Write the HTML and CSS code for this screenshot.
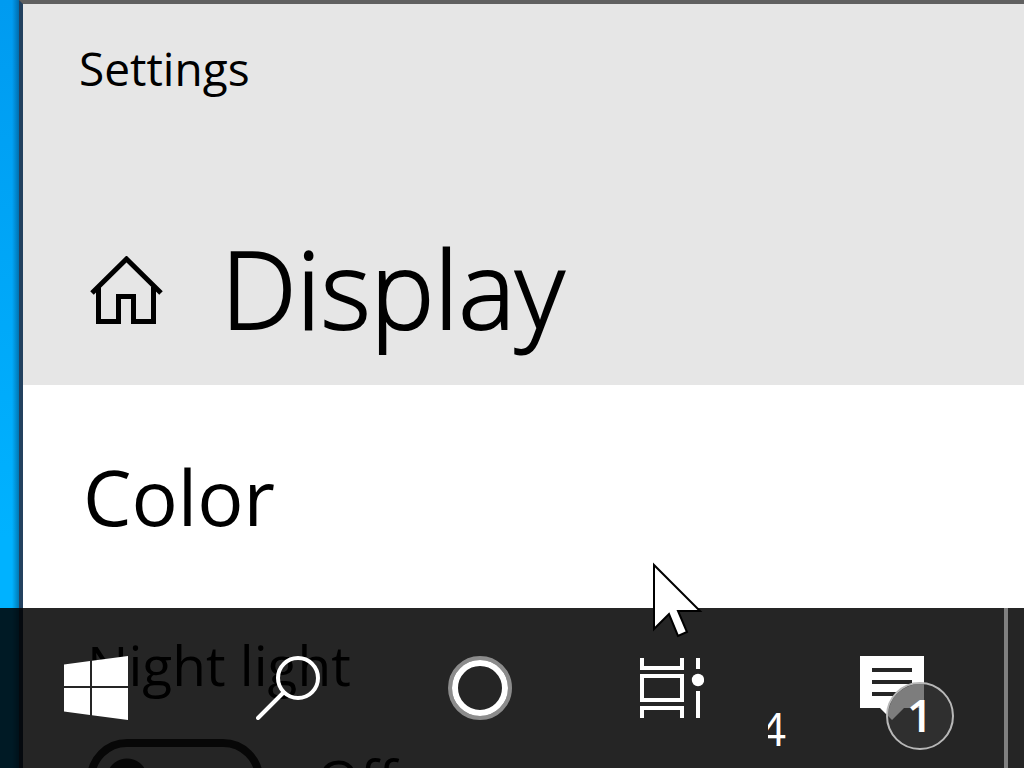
FILE: index.html
```html
<!DOCTYPE html>
<html lang="en">
<head>
<meta charset="utf-8">
<title>Settings</title>
<link rel="stylesheet" href="styles.css">
</head>
<body>
<div class="desktop">
  <main class="window">
    <header class="window-header">
      <div class="window-title">Settings</div>
      <div class="page-heading">
        <button class="home" aria-label="Home">
          <svg width="76" height="72" viewBox="0 0 76 72" fill="none" stroke="#000" stroke-width="5">
            <path d="M3 37 37.500 3 72 37"/>
            <path d="M9.500 31v34.500h20v-25h15v25h20V31"/>
          </svg>
        </button>
        <h1 class="page-name">Display</h1>
      </div>
    </header>
    <section class="content">
      <h2 class="section-name">Color</h2>
      <div class="setting">
        <label class="setting-name" for="night-light">Night light</label>
        <div class="switch-row">
          <input class="switch" type="checkbox" role="switch" id="night-light">
          <span class="switch-state">Off</span>
        </div>
      </div>
    </section>
  </main>
  <nav class="taskbar" aria-label="Taskbar">
    <button class="task" aria-label="Start">
      <svg width="64" height="64" viewBox="0 0 64 64" fill="#fff">
        <path d="M0 8.500 26 5v25H0zM28 4.700 64 0v30H28zM0 32h26v27L0 55.500zM28 32h36v32L28 59.300z"/>
      </svg>
    </button>
    <button class="task" aria-label="Search">
      <svg width="64" height="64" viewBox="0 0 64 64" fill="none" stroke="#fff" stroke-width="4">
        <circle cx="42" cy="22" r="20"/>
        <path d="M27.500 36.500 2 62" stroke-linecap="round"/>
      </svg>
    </button>
    <button class="task" aria-label="Cortana">
      <svg width="64" height="64" viewBox="0 0 64 64" fill="none">
        <circle cx="32" cy="32" r="30" stroke="#8c8c8c" stroke-width="4"/>
        <circle cx="32" cy="32" r="25" stroke="#fff" stroke-width="6"/>
      </svg>
    </button>
    <button class="task" aria-label="Task View">
      <svg width="64" height="64" viewBox="0 0 64 64" fill="none" stroke="#fff" stroke-width="4">
        <path d="M2 2v10h40V2M2 20h40v24H2zM2 62V52h40v10M58 2v11M58 35v27"/>
        <circle cx="58" cy="24" r="6.200" fill="#fff" stroke="none"/>
      </svg>
    </button>
    <div class="tray">
      <div class="clock"><span>4</span></div>
      <button class="notifications" aria-label="Notifications, 1 new">
        <svg width="96" height="96" viewBox="0 0 96 96">
          <path fill="#fff" d="M0 0h64v52H44L32 64 20 52H0z"/>
          <path stroke="#252525" stroke-width="4" d="M12 14h40M12 26h40M12 38h40"/>
          <circle cx="60" cy="60" r="33" fill="#2f2f2f"/>
          <clipPath id="badge-area"><circle cx="60" cy="60" r="32"/></clipPath>
          <path clip-path="url(#badge-area)" fill="#7d7d7d" d="M0 0h64v52H44L32 64 20 52H0z"/>
          <circle cx="60" cy="60" r="33" fill="none" stroke="#b8b8b8" stroke-width="2"/>
        </svg>
        <span class="badge">1</span>
      </button>
      <button class="show-desktop" aria-label="Show desktop"></button>
    </div>
  </nav>
  <svg class="pointer" width="52" height="76" viewBox="0 0 52 76" aria-hidden="true">
    <path d="M2 3v64l15-15 9 22 9-4-9-21h22z" fill="#fff" stroke="#000" stroke-width="2"/>
  </svg>
</div>
</body>
</html>
```
FILE: styles.css
```css
* { box-sizing: border-box; }

body {
  margin: 0;
  font-family: "Open Sans", "Noto Sans", sans-serif;
  color: #000;
}

button {
  margin: 0;
  padding: 0;
  border: 0;
  background: none;
  color: inherit;
  font: inherit;
}

svg { display: block; }

.desktop {
  position: relative;
  height: 100vh;
  overflow: hidden;
  padding-left: 19px;
  background: linear-gradient(90deg, transparent 12px, rgba(0, 50, 90, .45) 19px, transparent 19px), linear-gradient(#009bf0, #00b2ff 70%);
}

.window {
  min-height: 100%;
  border-left: 4px solid #23415f;
  border-top: 4px solid #606060;
  background: #fff;
}

.window-header {
  padding: 32px 56px 25px;
  background: #e6e6e6;
}

.window-title {
  font-size: 46px;
  line-height: 64px;
}

.page-heading {
  display: flex;
  align-items: center;
  gap: 56px;
  padding: 0 10px;
  margin-top: 116px;
}

.page-name {
  margin: 0;
  font-size: 107px;
  font-weight: 300;
  line-height: 144px;
  -webkit-text-stroke: 2px #000;
}

.home { padding-top: 8px; }

.content { padding: 64px 60px 0; }

.section-name {
  margin: 0 0 88px;
  font-size: 77px;
  font-weight: 400;
  line-height: 96px;
}

.setting { padding-left: 4px; }

.setting-name {
  display: block;
  font-size: 55px;
  line-height: 64px;
}

.switch-row {
  display: flex;
  align-items: center;
  gap: 54px;
  padding-top: 42px;
}

.switch {
  appearance: none;
  width: 176px;
  height: 80px;
  margin: 0;
  border: 8px solid #333;
  border-radius: 40px;
  background: radial-gradient(circle at 32px 50%, #333 20px, transparent 21px);
}

.switch-state {
  font-size: 55px;
  line-height: 64px;
}

.taskbar {
  position: absolute;
  inset: auto 0 0;
  display: flex;
  height: 160px;
  background: rgba(0, 0, 0, .855);
  color: #fff;
}

.task {
  display: grid;
  place-items: center;
  width: 192px;
}

.tray {
  display: flex;
  flex: 1;
}

.clock {
  display: flex;
  justify-content: flex-end;
  align-items: flex-end;
  width: 18px;
  margin-right: auto;
  padding-bottom: 8px;
  overflow: hidden;
  font-size: 46px;
  line-height: 64px;
}

.notifications {
  position: relative;
  align-self: flex-start;
  margin: 48px 48px 0 0;
}

.badge {
  position: absolute;
  left: 28px;
  top: 26px;
  width: 64px;
  font-size: 46px;
  font-weight: 600;
  line-height: 64px;
  text-align: center;
}

.show-desktop {
  width: 20px;
  border-left: 4px solid #808080;
}

.pointer {
  position: absolute;
  left: 652px;
  top: 562px;
}
```
